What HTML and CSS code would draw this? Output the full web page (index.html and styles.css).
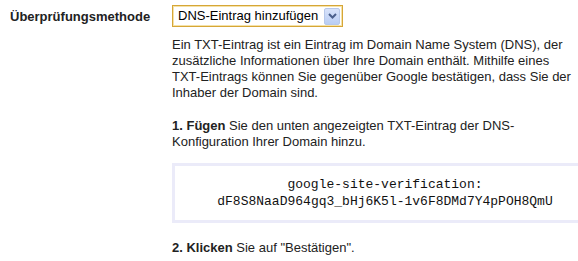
FILE: index.html
```html
<!DOCTYPE html>
<html lang="de">
<head>
    <meta charset="UTF-8">
    <title>Überprüfungsmethode</title>
    <link rel="stylesheet" href="styles.css">
</head>
<body>
<div class="row">
    <div class="label">Überprüfungsmethode</div>
    <div class="field">
        <div class="select">
            <span class="select-text">DNS-Eintrag hinzufügen</span>
            <span class="select-btn">
                <svg width="9" height="6" viewBox="0 0 9 6"><path d="M1 1 L4.5 4.5 L8 1" fill="none" stroke="#4a5f8c" stroke-width="2"/></svg>
            </span>
        </div>
        <p class="intro">Ein TXT-Eintrag ist ein Eintrag im Domain Name System (DNS), der zusätzliche Informationen über Ihre Domain enthält. Mithilfe eines TXT-Eintrags können Sie gegenüber Google bestätigen, dass Sie der Inhaber der Domain sind.</p>
        <p class="step"><b>1. Fügen</b> Sie den unten angezeigten TXT-Eintrag der DNS-Konfiguration Ihrer Domain hinzu.</p>
        <div class="code">google-site-verification:<br>dF8S8NaaD964gq3_bHj6K5l-1v6F8DMd7Y4pPOH8QmU</div>
        <p class="step"><b>2. Klicken</b> Sie auf "Bestätigen".</p>
    </div>
</div>
</body>
</html>
```

FILE: styles.css
```css
*{
    margin:0;
    padding:0;
}
html,body{
    overflow:hidden;
}
body{
    font-family:"Liberation Sans",Arial,sans-serif;
    font-size:13px;
    line-height:16px;
    color:#222;
    background:#fff;
}
.row{
    display:flex;
    padding-top:5px;
}
.label{
    width:162px;
    padding-left:10px;
    padding-top:4px;
    font-weight:bold;
    flex-shrink:0;
}
.field{
    width:406px;
    flex-shrink:0;
}
.select{
    display:inline-flex;
    align-items:center;
    height:20px;
    padding:0 2px 0 5px;
    border:1px solid #d6a637;
    box-shadow:inset 0 0 0 1px #f5e2a8;
    background:#fff;
}
.select-text{
    margin-right:6px;
    color:#000;
}
.select-btn{
    display:flex;
    align-items:center;
    justify-content:center;
    width:14px;
    height:15px;
    border:1px solid #b7c8ea;
    border-radius:2px;
    background:linear-gradient(#d8e3fa,#b9cdf4);
}
.intro{
    margin-top:10px;
}
.step{
    margin-top:17px;
}
.code{
    box-sizing:border-box;
    width:426px;
    margin-top:13px;
    padding:10px 0;
    border:3px solid #ebebf9;
    font-family:"Liberation Mono","Courier New",monospace;
    font-size:13px;
    line-height:17px;
    text-align:center;
    color:#111;
}
```
